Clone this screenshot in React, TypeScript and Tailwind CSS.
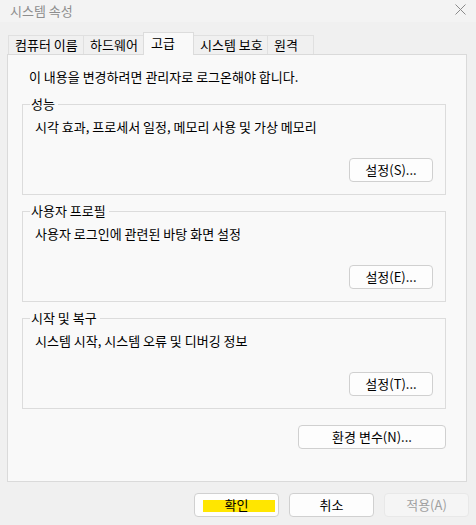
import React from "react";

const font = { fontFamily: '"Noto Sans CJK KR", "Noto Sans", sans-serif' };

function Btn({ children, className = "", disabled = false, highlight = false }: { children: React.ReactNode; className?: string; disabled?: boolean; highlight?: boolean }) {
  return (
    <div
      className={
        "relative flex h-[24px] items-center justify-center rounded-[4px] border text-[13px] leading-[16px] " +
        (disabled ? "border-[#e8e8e8] bg-[#f5f5f5] text-[#a0a0a0] " : "border-[#d0d0d0] bg-[#fdfdfd] text-black ") +
        className
      }
    >
      {highlight && <span className="absolute left-[8px] top-[6px] h-[12px] w-[72px] bg-[#ffe600]" />}
      <span className="relative">{children}</span>
    </div>
  );
}

function Group({ title, desc, btn }: { title: string; desc: string; btn: string }) {
  return (
    <div className="relative flex flex-col border border-[#dcdcdc] pl-[12px] pr-[12px] pt-[14px] pb-[12px]">
      <span className="absolute left-[7px] top-[-9px] bg-[#f9f9f9] pl-[1px] pr-[3px] text-[13px] leading-[16px] text-black">{title}</span>
      <div className="text-[13px] leading-[16px] text-black">{desc}</div>
      <div className="mt-[23px] flex justify-end">
        <Btn className="w-[84px]">{btn}</Btn>
      </div>
    </div>
  );
}

export default function App() {
  const tabs = [
    { label: "컴퓨터 이름", w: "w-[76px]" },
    { label: "하드웨어", w: "w-[61px]" },
    { label: "고급", w: "w-[51px]", sel: true },
    { label: "시스템 보호", w: "w-[75px]" },
    { label: "원격", w: "w-[47px]" },
  ];
  return (
    <div className="h-[525px] w-[476px] overflow-hidden bg-[#f0f0f0]" style={font}>
      <div className="flex h-[22px] items-center justify-between bg-[#f3f3f3] pl-[10px] pr-[10px]">
        <span className="text-[13px] leading-[16px] text-[#8e8e8e]">시스템 속성</span>
        <svg width="11" height="11" viewBox="0 0 11 11" className="mt-[-4px]">
          <path d="M0.5 0.5 L10.5 10.5 M10.5 0.5 L0.5 10.5" stroke="#8a8a8a" strokeWidth="1" />
        </svg>
      </div>
      <div className="pt-[10px]">
        <div className="flex h-[22px] items-end pl-[8px]">
          {tabs.map((t, i) => (
            <div
              key={t.label}
              className={
                t.w +
                " " +
                (i === 0 ? "" : "-ml-px ") +
                (t.sel
                  ? "relative z-10 -mb-px h-[23px] border-l border-r border-t border-[#dcdcdc] bg-[#f9f9f9] pl-[7px] pt-[2px]"
                  : "h-[19px] border-l border-r border-t border-[#e0e0e0] bg-[#f0f0f0] pl-[6px] pt-[1px]") +
                " whitespace-nowrap text-[13px] leading-[16px] text-black"
              }
            >
              {t.label}
            </div>
          ))}
        </div>
        <div className="ml-[7px] mr-[9px] border border-[#dadada] bg-[#f9f9f9] pb-[32px] pl-[14px] pr-[20px] pt-[14px]">
          <div className="pl-[7px] text-[13px] leading-[16px] text-black">이 내용을 변경하려면 관리자로 로그온해야 합니다.</div>
          <div className="mt-[19px] flex flex-col gap-[16px]">
            <Group title="성능" desc="시각 효과, 프로세서 일정, 메모리 사용 및 가상 메모리" btn="설정(S)..." />
            <Group title="사용자 프로필" desc="사용자 로그인에 관련된 바탕 화면 설정" btn="설정(E)..." />
            <Group title="시작 및 복구" desc="시스템 시작, 시스템 오류 및 디버깅 정보" btn="설정(T)..." />
          </div>
          <div className="mt-[16px] flex justify-end">
            <Btn className="w-[148px]">환경 변수(N)...</Btn>
          </div>
        </div>
        <div className="mt-[11px] flex justify-end gap-[10px] pr-[7px]">
          <Btn className="w-[85px]" highlight>
            확인
          </Btn>
          <Btn className="w-[85px]">취소</Btn>
          <Btn className="w-[85px]" disabled>
            적용(A)
          </Btn>
        </div>
      </div>
    </div>
  );
}
